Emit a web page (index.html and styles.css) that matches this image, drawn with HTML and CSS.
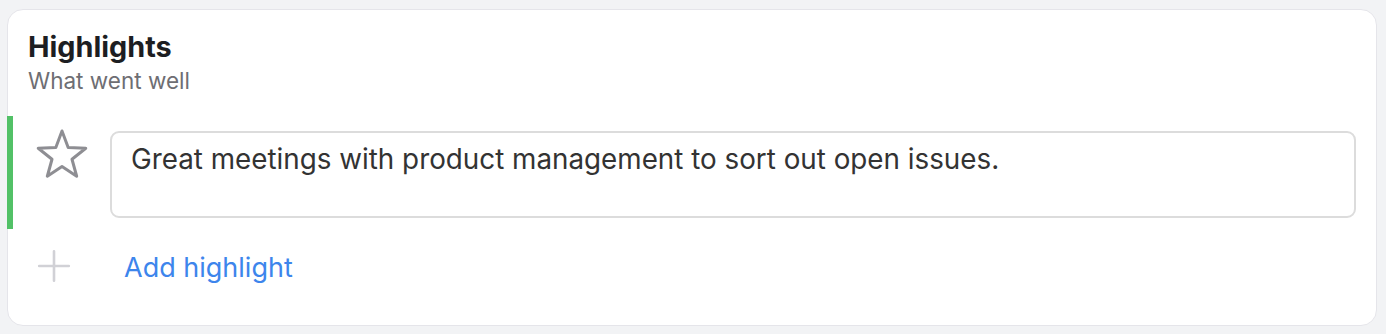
FILE: index.html
```html
<!DOCTYPE html>
<html>
<head>
<meta charset="utf-8">
<link rel="stylesheet" href="styles.css">
</head>
<body>
<section class="card">
  <header class="card-head">
    <h2 class="title">Highlights</h2>
    <p class="subtitle">What went well</p>
  </header>
  <div class="item">
    <div class="item-icon">
      <svg width="54" height="52" viewBox="0 0 54 52" class="star">
        <path d="M27 3 L33.17 19.51 L50.78 20.27 L36.99 31.24 L41.69 48.23 L27 38.5 L12.31 48.23 L17.01 31.24 L3.22 20.27 L20.83 19.51 Z" fill="none" stroke="#8e8e93" stroke-width="3" stroke-linejoin="round"/>
      </svg>
    </div>
    <div class="item-box">Great meetings with product management to sort out open issues.</div>
  </div>
  <div class="add">
    <div class="add-icon">
      <svg width="34" height="34" viewBox="0 0 34 34">
        <path d="M17 2.2 V31.8 M2.2 17 H31.8" stroke="#d1d1d6" stroke-width="2.6" stroke-linecap="round"/>
      </svg>
    </div>
    <span class="add-label">Add highlight</span>
  </div>
</section>
</body>
</html>
```
FILE: styles.css
```css
html, body {
  margin: 0;
  padding: 0;
  background: #f2f3f5;
}
body {
  padding: 9px 9px 8px 7px;
  font-family: Inter, "Noto Sans", sans-serif;
}
.card {
  background: #ffffff;
  border: 1px solid #e5e5ea;
  border-radius: 16px;
  box-sizing: border-box;
  height: 317px;
}
.card-head {
  padding: 20px 20px 0 20px;
}
.title {
  margin: 0;
  font-size: 28.8px;
  line-height: 34px;
  font-weight: 700;
  color: #1d1e22;
}
.subtitle {
  margin: 3px 0 0 0;
  font-size: 22.5px;
  line-height: 28px;
  color: #6e6e73;
}
.item {
  margin-top: 21px;
  margin-left: -1px;
  border-left: 6px solid #52c167;
  display: flex;
  padding: 15px 20px 11px 0;
}
.item-icon {
  width: 97px;
  flex: none;
  display: flex;
  justify-content: center;
  align-items: flex-start;
}
.star {
  display: block;
  margin-top: -3px;
}
.item-box {
  flex: 1;
  height: 87px;
  box-sizing: border-box;
  border: 2px solid #dcdcdc;
  border-radius: 9px;
  padding: 9px 19px;
  font-size: 27.8px;
  line-height: 34px;
  color: #333333;
}
.add {
  display: flex;
  align-items: flex-start;
  margin-top: 22px;
  padding-left: 29px;
}
.add-icon {
  flex: none;
  display: flex;
}
.add-icon svg {
  display: block;
  margin-top: -2px;
}
.add-label {
  margin-left: 53px;
  font-size: 27px;
  line-height: 34px;
  color: #3d85ec;
}
```
